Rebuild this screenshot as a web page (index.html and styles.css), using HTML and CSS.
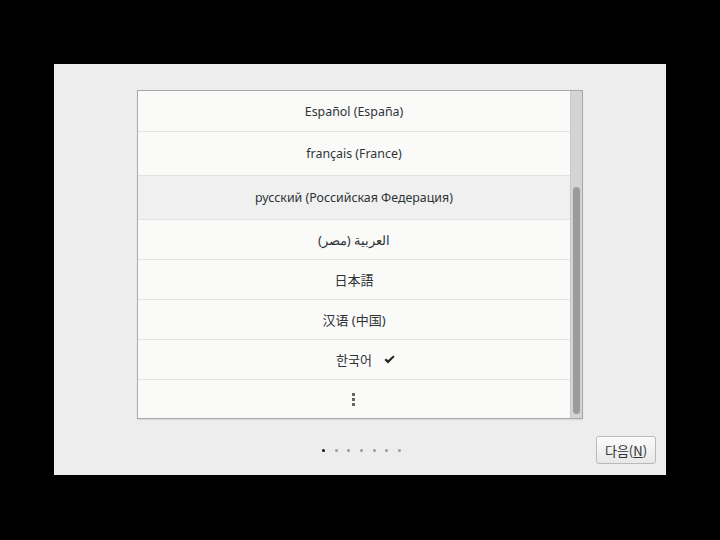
FILE: index.html
```html
<!DOCTYPE html>
<html lang="ko">
<head>
  <meta charset="UTF-8" />
  <title>언어</title>
  <link rel="stylesheet" href="styles.css">
</head>
<body>
  <div class="panel">
    <div class="list-box">
      <div class="rows">
        <div class="row row-tall first latin">Español (España)</div>
        <div class="row row-tall latin">français (France)</div>
        <div class="row row-tall hover latin">русский (Российская Федерация)</div>
        <div class="row" dir="rtl">العربية (مصر)</div>
        <div class="row">日本語</div>
        <div class="row">汉语 (中国)</div>
        <div class="row">
          <span class="label">한국어<span class="check">
            <svg width="11" height="9" viewBox="0 0 11 9"><path d="M0.5 5 L2.2 3.4 L4 5.3 L9.2 0.4 L10.6 1.8 L4 8.4 Z" fill="#222"/></svg>
          </span></span>
        </div>
        <div class="row more">
          <svg width="4" height="14" viewBox="0 0 4 14"><rect x="0" y="0" width="3" height="3" fill="#666"/><rect x="0" y="5" width="3" height="3" fill="#666"/><rect x="0" y="10" width="3" height="3" fill="#666"/></svg>
        </div>
      </div>
      <div class="trough">
        <div class="thumb"></div>
      </div>
    </div>

    <div class="footer">
      <div></div>
      <div class="pager">
        <span class="dot active"></span>
        <span class="dot"></span>
        <span class="dot"></span>
        <span class="dot"></span>
        <span class="dot"></span>
        <span class="dot"></span>
        <span class="dot"></span>
      </div>
      <div class="actions">
        <button class="next-btn">다음(<u>N</u>)</button>
      </div>
    </div>
  </div>
</body>
</html>
```

FILE: styles.css
```css
* {
  box-sizing: border-box;
}

body {
  margin: 0;
  background: #000;
  padding: 64px 54px 65px;
  font-family: 'Noto Sans', 'Noto Sans CJK KR', sans-serif;
  font-size: 13px;
  color: #2e3436;
}

.panel {
  background: #ededed;
  width: 612px;
  height: 411px;
  padding-top: 26px;
}

.list-box {
  width: 446px;
  height: 329px;
  margin: 0 auto;
  border: 1px solid #a9a9a9;
  background: #fafaf9;
  display: flex;
  box-shadow: 0 1px 1px rgba(0, 0, 0, 0.08);
}

.rows {
  flex: 1;
  display: flex;
  flex-direction: column;
}

.row {
  height: 40px;
  border-bottom: 1px solid #e3e3e2;
  display: flex;
  align-items: center;
  justify-content: center;
}

.row.latin {
  font-size: 12.4px;
}

.row-tall {
  height: 44px;
}

.row.first {
  height: 41px;
}

.row.hover {
  background: #f0f0f0;
}

.row.more {
  height: 38px;
  border-bottom: none;
  padding-top: 1px;
}

.label {
  position: relative;
}

.check {
  position: absolute;
  left: 100%;
  top: 5px;
  margin-left: 12px;
  display: flex;
}

.trough {
  width: 12px;
  background: #d4d4d4;
  border-left: 1px solid #c8c8c8;
  padding: 96px 2px 3px 2px;
}

.thumb {
  height: 227px;
  background: #9b9b9d;
  border-radius: 4px;
}

.footer {
  display: grid;
  grid-template-columns: 1fr auto 1fr;
  align-items: center;
  margin-top: 17px;
  padding: 0 10px 0 11px;
}

.pager {
  display: flex;
  gap: 9.6px;
  padding-left: 2px;
}

.dot {
  width: 3px;
  height: 3px;
  border-radius: 50%;
  background: #9a9a9a;
}

.dot.active {
  background: #111;
}

.actions {
  display: flex;
  justify-content: flex-end;
}

.next-btn {
  height: 28px;
  width: 60px;
  padding: 0;
  font-family: 'Noto Sans CJK KR', 'Noto Sans', sans-serif;
  font-size: 13px;
  color: #2e3436;
  border: 1px solid #b9b9b9;
  border-radius: 3px;
  background: linear-gradient(to bottom, #fbfbfb, #e8e8e8);
  box-shadow: inset 0 1px #fff;
}
```
